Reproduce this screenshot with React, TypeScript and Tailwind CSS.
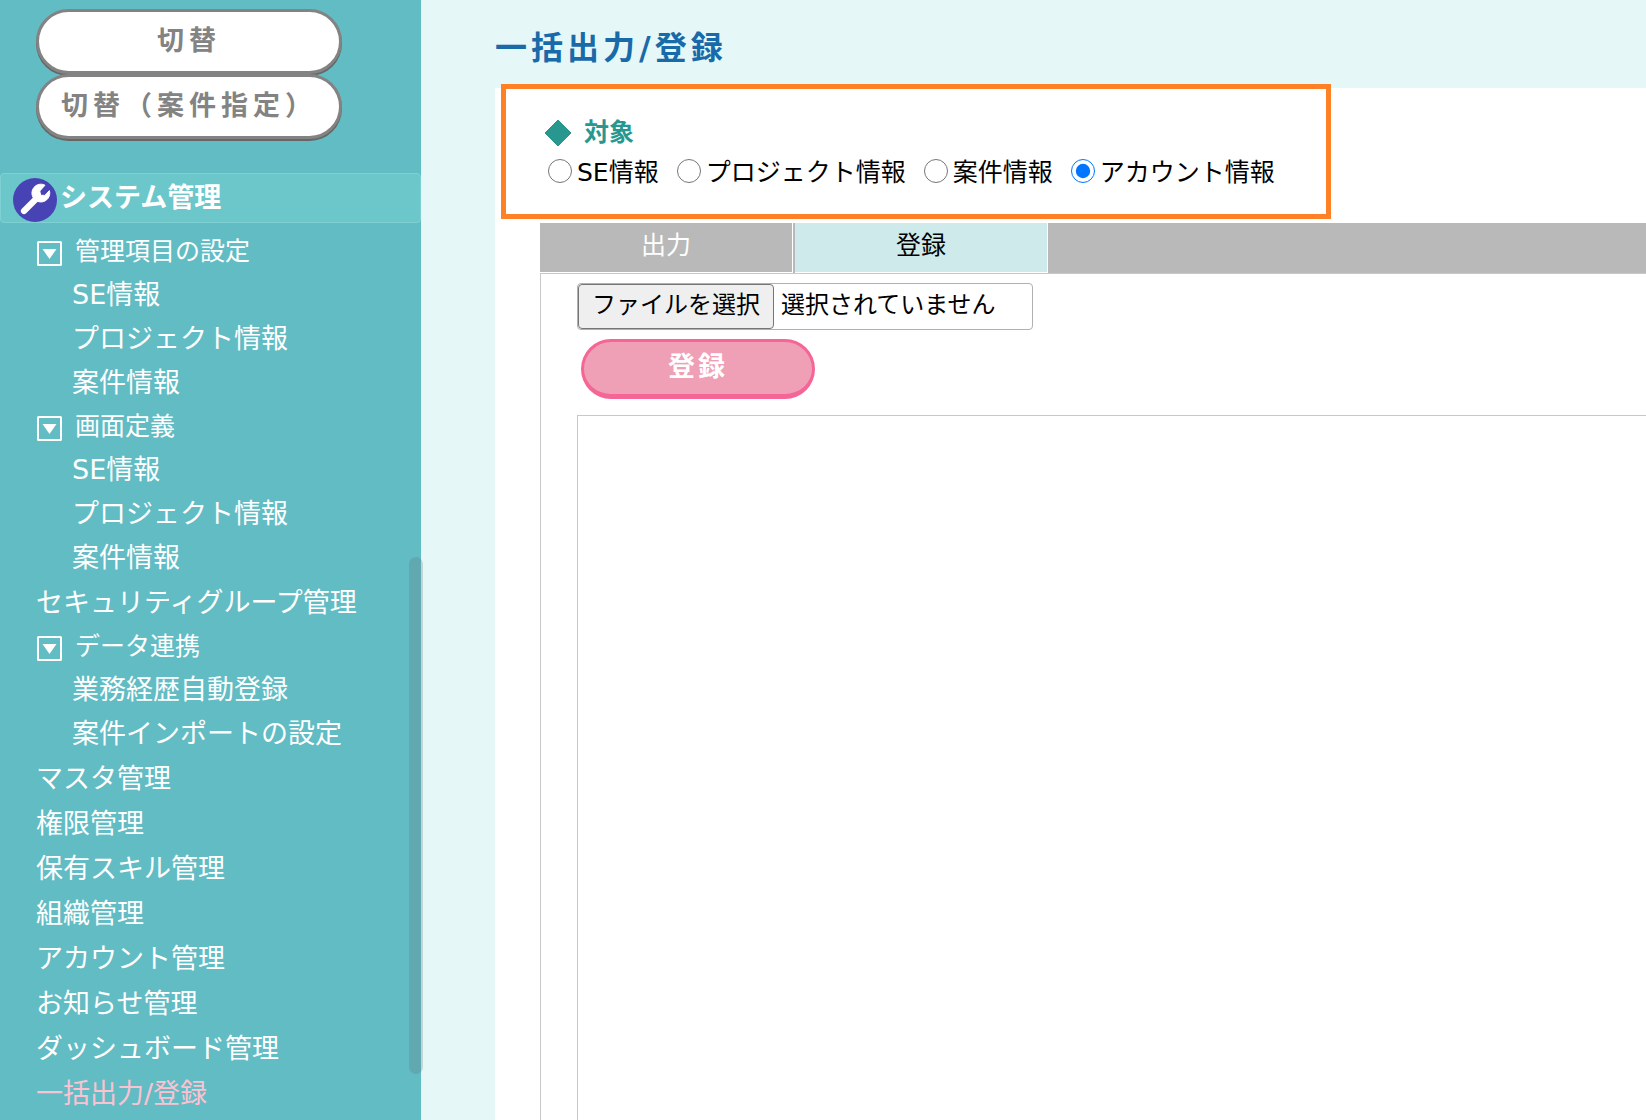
import { useState } from "react"

type MenuItem = {
  label: string
  children?: string[]
}

const menu: MenuItem[] = [
  { label: "管理項目の設定", children: ["SE情報", "プロジェクト情報", "案件情報"] },
  { label: "画面定義", children: ["SE情報", "プロジェクト情報", "案件情報"] },
  { label: "セキュリティグループ管理" },
  { label: "データ連携", children: ["業務経歴自動登録", "案件インポートの設定"] },
  { label: "マスタ管理" },
  { label: "権限管理" },
  { label: "保有スキル管理" },
  { label: "組織管理" },
  { label: "アカウント管理" },
  { label: "お知らせ管理" },
  { label: "ダッシュボード管理" },
  { label: "一括出力/登録" },
]

const targets = ["SE情報", "プロジェクト情報", "案件情報", "アカウント情報"]
const tabs = ["出力", "登録"]

function WrenchIcon() {
  return (
    <svg viewBox="0 0 44 44" className="mt-1 size-11 shrink-0" aria-hidden="true">
      <circle cx="22" cy="22" r="22" fill="#4843b5" />
      <path d="M11 33 L25 19" stroke="#fff" strokeWidth="6.2" strokeLinecap="round" />
      <path
        d="M32 7.2 A8.9 8.9 0 1 0 36.4 12.6 L31.8 17.4 L27.6 17.2 L26.8 13 Z"
        fill="#fff"
        stroke="#fff"
        strokeWidth="1"
        strokeLinejoin="round"
      />
    </svg>
  )
}

function ToggleIcon() {
  return (
    <svg viewBox="0 0 26 26" className="mt-[3px] size-[26px] shrink-0" aria-hidden="true">
      <rect x="2" y="2" width="23" height="23" rx="0.5" fill="none" stroke="#fff" strokeWidth="2" />
      <path d="M6.5 9 H20.5 L13.5 19 Z" fill="#fff" />
    </svg>
  )
}

function Sidebar() {
  const current = "一括出力/登録"

  return (
    <aside className="relative w-[421px] shrink-0 bg-[#62bcc4] text-white">
      <div className="flex w-[306px] flex-col ml-9 pt-[9px] text-[27px] font-bold text-[#838383]">
        {["切替", "切替（案件指定）"].map((label) => (
          <button
            key={label}
            className="h-[65px] rounded-full border-3 border-[#838383] bg-white tracking-[5px] whitespace-nowrap shadow-[0_2px_0_#666]"
          >
            {label}
          </button>
        ))}
      </div>

      <h2 className="mt-[34px] flex h-[50px] items-center gap-[3px] rounded border border-[#7fd0d2] bg-[#6bc7ca] pl-3 text-[27px] font-bold">
        <WrenchIcon />
        システム管理
      </h2>

      <ul className="pt-[7px] pl-9 text-[27px]">
        {menu.map((item) =>
          item.children ? (
            <li key={item.label}>
              <button className="flex h-[43px] items-center gap-[13px] text-[25px]">
                <ToggleIcon />
                {item.label}
              </button>
              <ul className="pl-9">
                {item.children.map((child) => (
                  <li key={child}>
                    <a href="#" className="block leading-[44px]">{child}</a>
                  </li>
                ))}
              </ul>
            </li>
          ) : (
            <li key={item.label}>
              <a
                href="#"
                className={`block leading-[45px] ${item.label === current ? "text-[#fbc3d2]" : ""}`}
              >
                {item.label}
              </a>
            </li>
          )
        )}
      </ul>

      {/* scroll thumb */}
      <div className="absolute top-[557px] -right-[2px] h-[517px] w-[14px] rounded-full bg-[#5f6e78]/25" />
    </aside>
  )
}

export default function App() {
  const [target, setTarget] = useState("アカウント情報")
  const [tab, setTab] = useState("登録")

  return (
    <div className="flex min-h-screen bg-[#e6f7f7] font-['DejaVu_Sans','Noto_Sans_CJK_JP',sans-serif] text-black">
      <Sidebar />

      <main className="flex min-w-0 flex-1 flex-col pl-[74px]">
        <h1 className="h-[88px] pt-[26px] text-[32px] leading-[44px] font-bold tracking-[4px] text-[#186aa8]">
          一括出力/登録
        </h1>

        <div className="flex flex-1 flex-col bg-white">
          <fieldset className="relative -mt-1 ml-[6px] h-[135px] max-w-[830px] border-5 border-[#ff8126] pt-[26px] pl-[38px]">
            <div className="flex h-9 items-center gap-3 text-[25px] font-bold text-[#27978f]">
              <svg viewBox="0 0 28 28" className="size-7" aria-hidden="true">
                <path d="M14 1 L27 14 L14 27 L1 14 Z" fill="#27978f" stroke="#27978f" strokeLinejoin="round" />
              </svg>
              対象
            </div>
            <div className="flex h-10 items-center gap-[18px] pl-1 text-[25px] whitespace-nowrap">
              {targets.map((name) => (
                <label key={name} className="flex items-center gap-[5px]">
                  <input
                    type="radio"
                    name="target"
                    className="size-6"
                    checked={target === name}
                    onChange={() => setTarget(name)}
                  />
                  <span className="pt-1">{name}</span>
                </label>
              ))}
            </div>
          </fieldset>

          <div className="mt-1 ml-[45px] flex flex-1 flex-col">
            <div role="tablist" className="flex h-[50px] gap-[2px] bg-[#b9b9b9] text-[25px]">
              {tabs.map((name) => (
                <button
                  key={name}
                  role="tab"
                  aria-selected={tab === name}
                  onClick={() => setTab(name)}
                  className={`w-[253px] border-r border-b border-white pb-[3px] ${tab === name ? "bg-[#cfeaea]" : "text-white"}`}
                >
                  {name}
                </button>
              ))}
            </div>

            <div className="flex flex-1 flex-col items-start border-t border-l border-[#c8c8c8] pt-[9px] pl-9">
              <label className="flex h-[47px] w-[456px] items-center rounded-sm border border-[#b0b0b0] text-2xl whitespace-nowrap">
                <input type="file" className="sr-only" />
                <span className="flex h-[45px] w-[196px] items-center justify-center rounded-sm border border-[#767676] bg-[#efefef] pb-[3px]">
                  ファイルを選択
                </span>
                <span className="pb-[3px] pl-[7px]">選択されていません</span>
              </label>

              <button className="mt-[9px] ml-1 h-[60px] w-[234px] rounded-full border-3 border-b-5 border-[#f56596] bg-[#ef9fb6] pb-[2px] text-[27px] font-bold tracking-[3px] text-white">
                登録
              </button>

              <div className="mt-4 w-full flex-1 border-t border-l border-[#c8c8c8]" />
            </div>
          </div>
        </div>
      </main>
    </div>
  )
}
